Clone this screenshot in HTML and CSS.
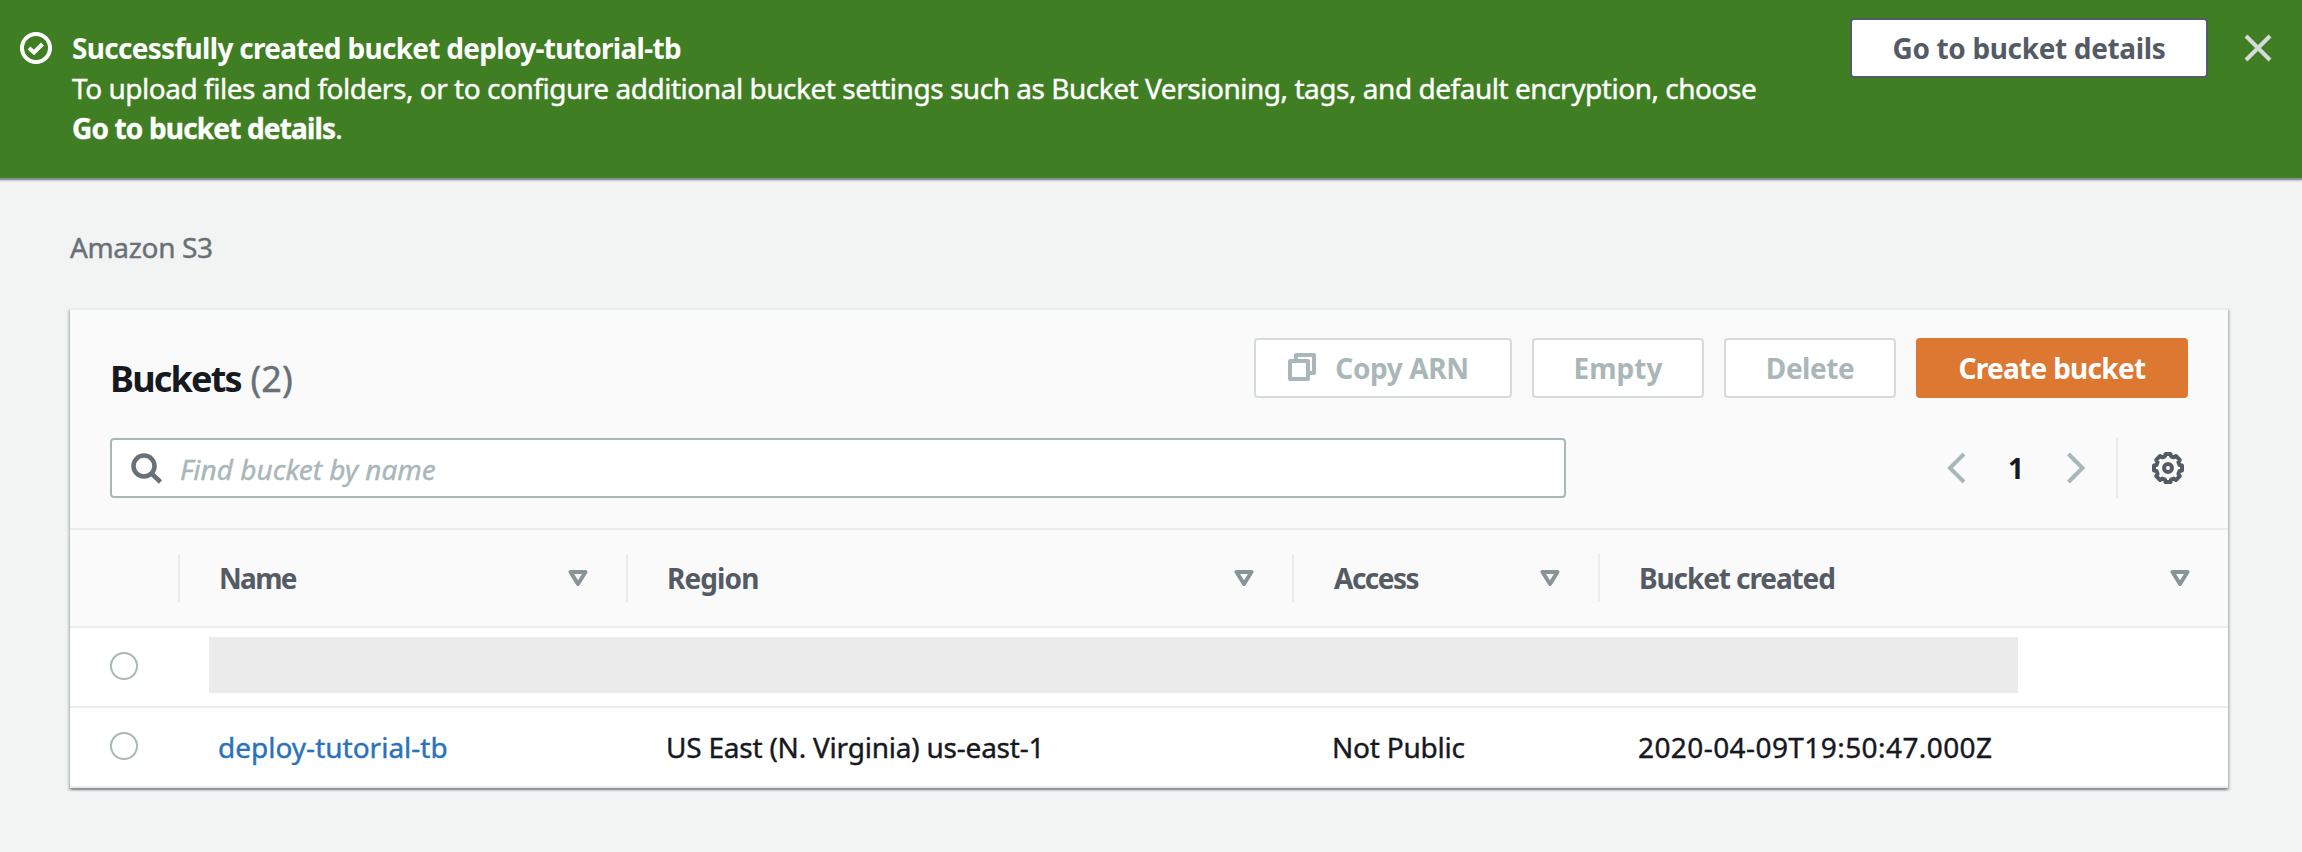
FILE: index.html
```html
<!DOCTYPE html>
<html lang="en">
<head>
<meta charset="utf-8">
<title>S3 buckets</title>
<link rel="stylesheet" href="styles.css">
</head>
<body>
<header class="flash">
  <svg class="flash-icon" width="32" height="32" viewBox="0 0 32 32"><circle cx="16" cy="16" r="14"/><path d="M9 16l5 4.500 8.500-8.500"/></svg>
  <div class="flash-text">
    <div class="flash-title">Successfully created bucket deploy-tutorial-tb</div>
    <div class="flash-body">To upload files and folders, or to configure additional bucket settings such as Bucket Versioning, tags, and default encryption, choose</div>
    <div class="flash-body"><b class="flash-strong">Go to bucket details</b>.</div>
  </div>
  <button class="btn btn-details">Go to bucket details</button>
  <svg class="close" width="28" height="28" viewBox="0 0 28 28"><path d="M2 2l24 24M26 2L2 26"/></svg>
</header>
<main class="page">
  <nav class="crumb">Amazon S3</nav>
  <section class="card">
    <div class="card-head">
      <div class="title-row">
        <h1 class="title">Buckets <span class="count">(2)</span></h1>
        <div class="actions">
          <button class="btn btn-off btn-copy"><svg width="28" height="28" viewBox="0 0 28 28"><path d="M8 6V2h18v18h-4M2 8h18v18H2z"/></svg><span>Copy ARN</span></button>
          <button class="btn btn-off btn-empty">Empty</button>
          <button class="btn btn-off btn-delete">Delete</button>
          <button class="btn btn-primary">Create bucket</button>
        </div>
      </div>
      <div class="filter-row">
        <div class="search">
          <svg width="32" height="32" viewBox="0 0 32 32"><circle cx="13" cy="14" r="10.500"/><path d="M20.500 21.500l9 8.500"/></svg>
          <span>Find bucket by name</span>
        </div>
        <div class="pager">
          <svg class="chev" width="20" height="32" viewBox="0 0 20 32"><path d="M18 2L4 16l14 14"/></svg>
          <span class="page-no">1</span>
          <svg class="chev" width="20" height="32" viewBox="0 0 20 32"><path d="M2.500 2l14 14-14 14"/></svg>
          <i class="pager-line"></i>
          <svg class="gear" width="32" height="32" viewBox="0 0 32 32"><path d="M13.500 2h5l.5 2.300 2.700 1.100 2.200-1.400 3.900 3.900-1.400 2.200 1.100 2.900 2.500.5v5l-2.500.5-1.100 2.900 1.400 2.200-3.900 3.900-2.200-1.400-2.700 1.100-.5 2.300h-5l-.5-2.300-2.700-1.100-2.200 1.400-3.900-3.900 1.400-2.200-1.100-2.900L2 18.500v-5l2.500-.5 1.100-2.900-1.400-2.200 3.900-3.900 2.200 1.400 2.700-1.100z"/><circle cx="16" cy="16" r="4"/></svg>
        </div>
      </div>
    </div>
    <div class="row thead">
      <div class="cell"></div>
      <div class="cell"><span class="h-name">Name</span><svg class="tri" width="20" height="16" viewBox="0 0 20 16"><path d="M2.500 2h15L10 14z"/></svg></div>
      <div class="cell"><span class="h-region">Region</span><svg class="tri" width="20" height="16" viewBox="0 0 20 16"><path d="M2.500 2h15L10 14z"/></svg></div>
      <div class="cell"><span class="h-access">Access</span><svg class="tri" width="20" height="16" viewBox="0 0 20 16"><path d="M2.500 2h15L10 14z"/></svg></div>
      <div class="cell"><span class="h-created">Bucket created</span><svg class="tri" width="20" height="16" viewBox="0 0 20 16"><path d="M2.500 2h15L10 14z"/></svg></div>
    </div>
    <div class="row-hidden"><i class="radio"></i><div class="mask"></div></div>
    <div class="row data">
      <div><i class="radio"></i></div>
      <div><a class="link">deploy-tutorial-tb</a></div>
      <div class="d-region">US East (N. Virginia) us-east-1</div>
      <div class="d-access">Not Public</div>
      <div class="d-created">2020-04-09T19:50:47.000Z</div>
    </div>
  </section>
</main>
</body>
</html>
```
FILE: styles.css
```css
* { box-sizing: border-box; }
body {
  margin: 0;
  height: 852px;
  overflow: hidden;
  background: #f2f3f3;
  color: #16191f;
  font: 28px/40px "Noto Sans", sans-serif;
}
svg { display: block; flex: none; fill: none; }
.flash {
  display: flex;
  align-items: flex-start;
  height: 178px;
  padding: 18px 30px 0 20px;
  background: #3f7e23;
  color: #fff;
  box-shadow: 0 2px 1px #8b9298, 0 3px 2px rgba(0, 28, 36, .15);
}
.flash-icon { margin-top: 14px; stroke: #fff; stroke-width: 4; }
.flash-text { width: 1798px; padding: 10px 0 0 20px; white-space: nowrap; }
.flash-title { font-weight: 700; letter-spacing: -.7px; }
.flash-body { letter-spacing: -.47px; }
.flash-strong { letter-spacing: -.84px; }
.flash-body, .crumb, .count, .search, .data { -webkit-text-stroke: .4px currentColor; }
.btn {
  display: flex;
  align-items: center;
  justify-content: center;
  height: 60px;
  padding: 0;
  border: 2px solid #545b64;
  border-radius: 4px;
  background: #fff;
  color: #545b64;
  font: 700 28px/40px "Noto Sans", sans-serif;
  white-space: nowrap;
}
.btn-details { width: 358px; letter-spacing: -.35px; }
.close { margin: 16px 0 0 36px; stroke: #d5dbdb; stroke-width: 4; }
.page { padding: 49px 74px 0 70px; }
.crumb { height: 40px; color: #687078; letter-spacing: -.35px; }
.card {
  height: 480px;
  margin-top: 41px;
  background: #fff;
  box-shadow: 0 2px 2px rgba(0, 28, 36, .3), 2px 2px 2px rgba(0, 28, 36, .15), -2px 2px 2px rgba(0, 28, 36, .15);
}
.card-head {
  height: 222px;
  padding: 28px 40px 0;
  border-top: 2px solid #eaeded;
  border-bottom: 2px solid #eaeded;
  background: #fafafa;
}
.title-row, .filter-row, .actions, .pager { display: flex; }
.title-row { justify-content: space-between; height: 60px; }
.title { margin: 17px 0 0; font-size: 36px; line-height: 48px; letter-spacing: -1.8px; }
.count { color: #687078; font-weight: 400; letter-spacing: .1px; margin-left: 2px; }
.actions { gap: 20px; }
.btn-off { border-color: #d5dbdb; color: #aab7b8; }
.btn-copy { width: 258px; gap: 19px; letter-spacing: -.37px; padding-right: 9px; }
.btn-copy svg { stroke: #aab7b8; stroke-width: 4; stroke-linejoin: round; margin-top: -4px; margin-bottom: -2px; }
.btn-empty { width: 172px; }
.btn-delete { width: 172px; letter-spacing: -.48px; }
.btn-primary { width: 272px; border-color: #dd7832; background: #dd7832; color: #fff; letter-spacing: -.71px; }
.filter-row { justify-content: space-between; margin-top: 40px; }
.search {
  display: flex;
  align-items: center;
  gap: 17px;
  width: 1456px;
  height: 60px;
  padding-left: 19px;
  border: 2px solid #aab7b8;
  border-radius: 4px;
  background: #fff;
  color: #aab7b8;
  font-style: italic;
}
.search svg { stroke: #687078; stroke-width: 4.500; }
.search span { padding-top: 1px; }
.pager { align-items: center; height: 60px; padding-right: 4px; }
.chev { stroke: #aab7b8; stroke-width: 4; }
.page-no { width: 100px; text-align: center; font-weight: 700; padding-bottom: 1px; }
.pager-line { width: 2px; height: 60px; margin: 0 34px 0 30px; background: #eaeded; }
.gear { stroke: #545b64; stroke-width: 4; stroke-linejoin: round; }
.row { display: grid; grid-template-columns: 110px 448px 666px 306px 628px; align-items: center; white-space: nowrap; }
.thead { height: 98px; border-bottom: 2px solid #eaeded; background: #fafafa; color: #545b64; font-weight: 700; }
.cell { display: flex; align-items: center; justify-content: space-between; height: 48px; padding: 0 38px 0 39px; border-right: 2px solid #eaeded; }
.cell:last-child { border-right: 0; }
.cell span { padding-bottom: 1px; }
.tri { stroke: #879596; stroke-width: 4; stroke-linejoin: round; }
.h-name { letter-spacing: -1.700px; }
.h-region { letter-spacing: -.9px; }
.h-access { letter-spacing: -1.500px; padding-left: 1px; }
.h-created { letter-spacing: -1.100px; }
.row-hidden { display: flex; align-items: flex-start; height: 80px; padding: 9px 0 0 40px; border-bottom: 2px solid #eaeded; }
.radio { display: block; width: 28px; height: 28px; border: 2px solid #aab7b8; border-radius: 50%; background: #fff; }
.row-hidden .radio { margin-top: 15px; }
.mask { width: 1809px; height: 56px; margin-left: 71px; background: #ebebeb; }
.data { height: 80px; border-bottom: 2px solid #eaeded; }
.data > div { padding: 0 0 1px 37px; }
.data > div:first-child { padding: 0 0 2px 40px; }
.link { padding-left: 1px; color: #2a72b9; }
.data .d-region { padding-left: 38px; letter-spacing: -.22px; }
.data .d-access { padding-left: 38px; letter-spacing: -.22px; }
.data .d-created { padding-left: 38px; letter-spacing: .42px; }
```
